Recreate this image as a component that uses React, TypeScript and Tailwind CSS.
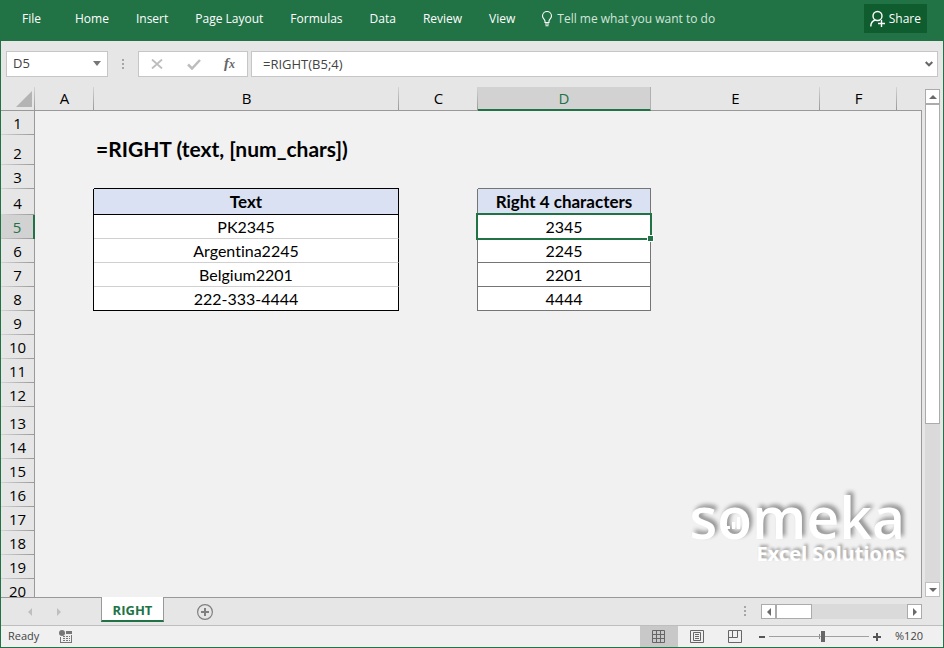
import React from "react";

const UI = "font-['Open_Sans','Noto_Sans',sans-serif]";
const CELL = "font-[Lato,'Open_Sans',sans-serif] [font-variant-ligatures:none]";

const menu = ["Home", "Insert", "Page Layout", "Formulas", "Data", "Review", "View"];

const columns = [
  { name: "A", width: "w-[59px]" },
  { name: "B", width: "w-[305px]" },
  { name: "C", width: "w-[79px]" },
  { name: "D", width: "w-[173px]" },
  { name: "E", width: "w-[169px]" },
  { name: "F", width: "w-[77px]" },
];

const tallRows: Record<number, string> = { 2: "h-[30px]", 4: "h-[26px]", 13: "h-[28px]" };

const data: Record<number, [string, string]> = {
  4: ["Text", "Right 4 characters"],
  5: ["PK2345", "2345"],
  6: ["Argentina2245", "2245"],
  7: ["Belgium2201", "2201"],
  8: ["222-333-4444", "4444"],
};

function MenuBar() {
  return (
    <header className="flex h-[41px] shrink-0 items-start bg-[#217346] pr-[17px] text-[12px] text-white">
      <button type="button" className="h-[38px] pl-[22px]">
        File
      </button>
      <nav className="flex h-[38px] items-center gap-[27px] pl-[34px]">
        {menu.map((m) => (
          <button key={m} type="button" className="whitespace-nowrap">
            {m}
          </button>
        ))}
      </nav>
      <button type="button" className="ml-[26px] flex h-[38px] items-center gap-1 text-[#d3e5db]">
        <svg width="12" height="16" viewBox="0 0 12 16" fill="none" stroke="#fff" strokeWidth="1.1">
          <path d="M4 11.5V10C4 8.5 1.5 7.5 1.5 5a4.5 4.5 0 0 1 9 0C10.500 7.500 8 8.500 8 10v1.500z" />
          <path d="M4 13h4M4.500 14.800h3" />
        </svg>
        <span className="whitespace-nowrap">Tell me what you want to do</span>
      </button>
      <button
        type="button"
        className="mt-1 ml-auto flex h-[29px] items-center gap-1 bg-[#0f5c2f] px-[6px]"
      >
        <svg width="15" height="18" viewBox="0 0 15 18" fill="none" stroke="#fff" strokeWidth="1.400">
          <circle cx="7.500" cy="6" r="4.500" />
          <path d="M.8 16.500c0-3.500 1.700-5.700 4.600-6.500M11.500 10v7M8 13.500h7" />
        </svg>
        Share
      </button>
    </header>
  );
}

function Dots() {
  return (
    <svg width="2" height="11" viewBox="0 0 2 11" fill="#a6a6a6" className="shrink-0">
      <path d="M0 0h2v2H0zM0 4h2v2H0zM0 8h2v2H0z" />
    </svg>
  );
}

function FormulaBar() {
  return (
    <div className="flex h-[46px] shrink-0 items-start px-[5px] pt-[10px] text-[13px] text-[#444]">
      <div className="relative h-[26px] w-[102px] shrink-0 border border-[#c6c6c6] bg-white">
        <select
          aria-label="Name box"
          defaultValue="D5"
          className="h-full w-full appearance-none bg-transparent pl-[6px] outline-none"
        >
          <option>D5</option>
        </select>
        <svg width="8" height="5" viewBox="0 0 8 5" fill="#777" className="pointer-events-none absolute top-[9px] right-[6px]">
          <path d="M0 0h8L4 5z" />
        </svg>
      </div>
      <div className="flex h-[26px] w-[30px] shrink-0 items-center justify-center">
        <Dots />
      </div>
      <div className="flex h-[26px] w-[110px] shrink-0 items-center justify-between border border-[#c6c6c6] bg-white px-3">
        <button type="button" aria-label="Cancel">
          <svg width="12" height="10" viewBox="0 0 12 10" stroke="#bdbdbd" strokeWidth="1.800" fill="none">
            <path d="M1 .5l10 9M11 .5l-10 9" />
          </svg>
        </button>
        <button type="button" aria-label="Enter">
          <svg width="14" height="11" viewBox="0 0 14 11" stroke="#bdbdbd" strokeWidth="2.500" fill="none">
            <path d="M1 5.500l4 4L13 1" />
          </svg>
        </button>
        <button
          type="button"
          aria-label="Insert function"
          className="pb-px font-['Liberation_Serif',serif] text-[15px] leading-5 font-bold text-[#666] italic"
        >
          f<span className="text-[12px]">x</span>
        </button>
      </div>
      <div className="relative ml-[3px] h-[26px] min-w-0 flex-1 border border-[#c6c6c6] bg-white">
        <input
          aria-label="Formula"
          defaultValue="=RIGHT(B5;4)"
          className="h-full w-full bg-transparent pr-6 pl-[11px] outline-none"
        />
        <button type="button" aria-label="Expand formula bar" className="absolute top-[9px] right-1">
          <svg width="8" height="6" viewBox="0 0 8 6" fill="none" stroke="#666" strokeWidth="2" className="block">
            <path d="M.7 1L4 4.300 7.300 1" />
          </svg>
        </button>
      </div>
    </div>
  );
}

function textCell(row: number) {
  if (row === 3) return "border-b border-black text-[16px] leading-[22px]";
  if (row === 4) return "border-r border-b border-black bg-[#d9e1f2] text-[17px] leading-6 font-bold";
  if (row === 8) return "border-r border-b border-black bg-white text-[16px] leading-[22px]";
  if (row > 4 && row < 8)
    return "border-r border-b border-r-black border-b-[#d0d0d0] bg-white text-[16px] leading-[22px]";
  return "";
}

function resultCell(row: number) {
  if (row === 3) return "border-b border-[#757575] text-[16px] leading-[22px]";
  if (row === 4) return "border-r border-b border-[#757575] bg-[#d9e1f2] text-[17px] leading-6 font-bold";
  if (row > 4 && row < 9) return "border-r border-b border-[#757575] bg-white text-[16px] leading-[22px]";
  return "";
}

function Sheet() {
  const rows = Array.from({ length: 20 }, (_, i) => i + 1);
  return (
    <div className="relative min-w-0 flex-1 overflow-hidden">
      <table className="w-full table-fixed border-separate border-spacing-0 text-center">
        <colgroup>
          <col className="w-[34px]" />
          {columns.map((c) => (
            <col key={c.name} className={c.width} />
          ))}
          <col />
        </colgroup>
        <thead>
          <tr className="h-6 text-[15px] leading-[22px] text-black">
            <th className="border-b border-[#999] bg-linear-to-b from-[#d4d4d4] to-[#999] bg-[length:1px_100%] bg-right bg-no-repeat p-0">
              <svg width="16" height="16" viewBox="0 0 16 16" className="ml-[15px]" fill="#b4b4b4">
                <path d="M16 0v16H0z" />
              </svg>
            </th>
            {columns.map((c) =>
              c.name === "D" ? (
                <th
                  key={c.name}
                  scope="col"
                  className="border-r border-b-2 border-r-[#b0b0b0] border-b-[#217346] bg-[#d2d2d2] p-0 font-normal text-[#217346]"
                >
                  {c.name}
                </th>
              ) : (
                <th
                  key={c.name}
                  scope="col"
                  className="border-b border-[#999] bg-linear-to-b from-[#d4d4d4] to-[#999] bg-[length:1px_100%] bg-right bg-no-repeat p-0 pb-px font-normal"
                >
                  {c.name}
                </th>
              ),
            )}
            <th className="border-b border-[#999] p-0" />
          </tr>
        </thead>
        <tbody className="bg-[#f1f1f1]">
          {rows.map((r) => (
            <tr key={r} className={tallRows[r] ?? "h-6"}>
              <th
                scope="row"
                className={
                  r === 5
                    ? "border-r-2 border-r-[#217346] bg-[#d2d2d2] bg-linear-to-r from-[#c4c4c4] to-[#999] bg-[length:100%_1px] bg-bottom bg-no-repeat p-0 align-bottom text-[15px] leading-6 font-normal text-[#217346]"
                    : "border-r border-r-[#999] bg-[#e6e6e6] bg-linear-to-r from-[#d4d4d4] to-[#999] bg-[length:100%_1px] bg-bottom bg-no-repeat p-0 align-bottom text-[15px] leading-6 font-normal text-black"
                }
              >
                {r}
              </th>
              <td className={r > 3 && r < 9 ? "border-r border-black p-0" : "p-0"} />
              <td className={`p-0 align-bottom ${CELL} ${textCell(r)}`}>
                {r === 2 ? (
                  <h1 className="pb-[2px] pl-[2px] text-left text-[21px] leading-7 font-bold whitespace-nowrap">
                    =RIGHT (text, [num_chars])
                  </h1>
                ) : (
                  data[r]?.[0]
                )}
              </td>
              <td className={r > 3 && r < 9 ? "border-r border-[#757575] p-0" : "p-0"} />
              <td className={`relative p-0 align-bottom ${CELL} ${resultCell(r)}`}>
                {data[r]?.[1]}
                {r === 5 && (
                  <span className="absolute -inset-0.5 z-10 border-2 border-[#217346]">
                    <span className="absolute -right-1 -bottom-1 h-[7px] w-[7px] border border-white bg-[#217346]" />
                  </span>
                )}
              </td>
              <td className="p-0" />
              <td className="p-0" />
              <td className="p-0" />
            </tr>
          ))}
        </tbody>
      </table>
      <div className="absolute top-[23px] right-0 bottom-0 w-px bg-[#999]" />
      <div className="absolute right-[17px] bottom-[31px] text-right text-white">
        <div className="text-[57px] leading-[50px] font-semibold [text-shadow:3px_-3px_4px_rgba(0,0,0,0.4)]">
          s
          <span className="relative">
            o
            <svg width="14" height="14" viewBox="0 0 14 14" fill="#fff" className="absolute bottom-[26px] left-[10px]">
              <path d="M0 10h3v3H0zM5 6h3v7H5zM10 1h3v12h-3z" />
            </svg>
          </span>
          meka
        </div>
        <div className="font-['Noto_Sans',sans-serif] text-[20px] leading-6 font-bold [text-shadow:2px_-2px_3px_rgba(0,0,0,0.35)]">
          Excel Solutions
        </div>
      </div>
    </div>
  );
}

function Arrow({ d, label, className }: { d: string; label: string; className: string }) {
  return (
    <button type="button" aria-label={label} className={`flex shrink-0 items-center justify-center border bg-white ${className}`}>
      <svg width="8" height="8" viewBox="0 0 8 8" fill="#6a6a6a">
        <path d={d} />
      </svg>
    </button>
  );
}

function VerticalScroll() {
  return (
    <div className="flex w-[21px] shrink-0 flex-col pt-[2px] pl-[3px]">
      <Arrow d="M0 6h8L4 2z" label="Scroll up" className="h-[15px] w-[15px] border-[#ababab]" />
      <div className="flex w-[15px] flex-1 flex-col bg-[#dadada]">
        <div className="h-[67%] border border-[#ababab] bg-white" />
      </div>
      <Arrow d="M0 2h8L4 6z" label="Scroll down" className="h-[15px] w-[15px] border-[#c0c0c0]" />
    </div>
  );
}

function TabStrip() {
  return (
    <div className="flex h-[28px] shrink-0">
      <div className="flex w-[100px] shrink-0 items-center gap-[25px] border-t border-[#999] pl-[27px]">
        <button type="button" aria-label="Previous sheet">
          <svg width="4" height="8" viewBox="0 0 4 8" fill="#bfbfbf" className="block">
            <path d="M4 0v8L0 4z" />
          </svg>
        </button>
        <button type="button" aria-label="Next sheet">
          <svg width="4" height="8" viewBox="0 0 4 8" fill="#bfbfbf" className="block">
            <path d="M0 0v8l4-4z" />
          </svg>
        </button>
      </div>
      <button
        type="button"
        className="h-[25px] w-[63px] shrink-0 border-x border-b-2 border-x-[#999] border-b-[#217346] bg-white pt-[3px] text-[13px] leading-5 font-bold text-[#217346]"
      >
        RIGHT
      </button>
      <div className="flex flex-1 items-center border-t border-[#999] pl-[33px]">
        <button type="button" aria-label="New sheet">
          <svg width="16" height="16" viewBox="0 0 16 16" fill="none" stroke="#808080" className="block">
            <circle cx="8" cy="8" r="7.400" strokeWidth="1.200" />
            <path d="M4 8h8M8 4v8" strokeWidth="2" />
          </svg>
        </button>
        <div className="ml-auto flex items-center">
          <Dots />
          <div className="ml-[15px] flex h-[15px] w-[161px] bg-[#dadada]">
            <Arrow d="M6 0v8L2 4z" label="Scroll left" className="h-[15px] w-[15px] border-[#ababab]" />
            <div className="w-9 border border-[#ababab] bg-white" />
            <div className="flex-1" />
            <Arrow d="M2 0v8l4-4z" label="Scroll right" className="h-[15px] w-[15px] border-[#ababab]" />
          </div>
        </div>
      </div>
      <div className="w-[21px] shrink-0" />
    </div>
  );
}

function StatusBar() {
  return (
    <footer className="flex h-[22px] shrink-0 items-center border-t border-[#bebebe] bg-[#f0f0f0] pl-[7px] text-[11px] text-[#444]">
      <span>Ready</span>
      <button type="button" aria-label="Record macro" className="ml-5">
        <svg width="14" height="14" viewBox="0 0 14 14" fill="#777" className="block">
          <circle cx="3" cy="3" r="3" />
          <path d="M7 1h6v3H7zM1 7h1v5h10V5h1v8H1z" />
          <path d="M4 6h2v1H4zM7 6h2v1H7zM10 6h1v1h-1zM4 8h2v1H4zM7 8h2v1H7zM10 8h1v1h-1zM4 10h2v1H4zM7 10h2v1H7zM10 10h1v1h-1z" />
        </svg>
      </button>
      <div className="ml-auto flex h-full items-center">
        <button type="button" aria-label="Normal view" className="flex h-full w-[38px] items-center justify-center bg-[#c8c8c8]">
          <svg width="14" height="13" viewBox="0 0 14 13" fill="none" stroke="#666">
            <path d="M.5 .5h12v12H.5zM4.500 0v13M8.500 0v13M0 4.500h13M0 8.500h13" />
          </svg>
        </button>
        <button type="button" aria-label="Page layout view" className="flex h-full w-[38px] items-center justify-center">
          <svg width="14" height="13" viewBox="0 0 14 13" fill="none" stroke="#666">
            <path d="M.5 .5h13v12H.5zM3.500 2.500h7v8h-7zM5 4.500h4M5 6.500h4M5 8.500h4" />
          </svg>
        </button>
        <button type="button" aria-label="Page break preview" className="flex h-full w-[38px] items-center justify-center">
          <svg width="14" height="13" viewBox="0 0 14 13" fill="none" stroke="#666">
            <path d="M.5 .5h13v12H.5zM4.500 0v7.500h5V0M0 7.500h9" />
          </svg>
        </button>
        <button type="button" aria-label="Zoom out" className="ml-1">
          <svg width="8" height="8" viewBox="0 0 8 8" fill="#555" className="block">
            <path d="M1 3h6v2H1z" />
          </svg>
        </button>
        <div className="relative ml-[3px] flex h-[11px] w-[100px] items-center">
          <span className="absolute top-[3px] left-1/2 h-[5px] w-px bg-[#888]" />
          <input
            type="range"
            aria-label="Zoom"
            min={0}
            max={100}
            defaultValue={54}
            className="relative h-[11px] w-full appearance-none bg-transparent bg-linear-to-r from-[#a0a0a0] to-[#a0a0a0] bg-[length:100%_1px] bg-center bg-no-repeat [&::-webkit-slider-thumb]:h-[11px] [&::-webkit-slider-thumb]:w-1 [&::-webkit-slider-thumb]:appearance-none [&::-webkit-slider-thumb]:bg-[#666]"
          />
        </div>
        <button type="button" aria-label="Zoom in" className="ml-1">
          <svg width="8" height="8" viewBox="0 0 8 8" fill="#555" className="block">
            <path d="M3 0h2v3h3v2H5v3H3V5H0V3h3z" />
          </svg>
        </button>
        <span className="ml-[14px] w-12">%120</span>
      </div>
    </footer>
  );
}

export default function App() {
  return (
    <div className={`flex h-screen flex-col overflow-hidden bg-[#e6e6e6] ${UI}`}>
      <MenuBar />
      <div className="flex min-h-0 flex-1 flex-col border-x border-b border-[#217346]">
        <FormulaBar />
        <main className="flex min-h-0 flex-1">
          <Sheet />
          <VerticalScroll />
        </main>
        <TabStrip />
        <StatusBar />
      </div>
    </div>
  );
}
